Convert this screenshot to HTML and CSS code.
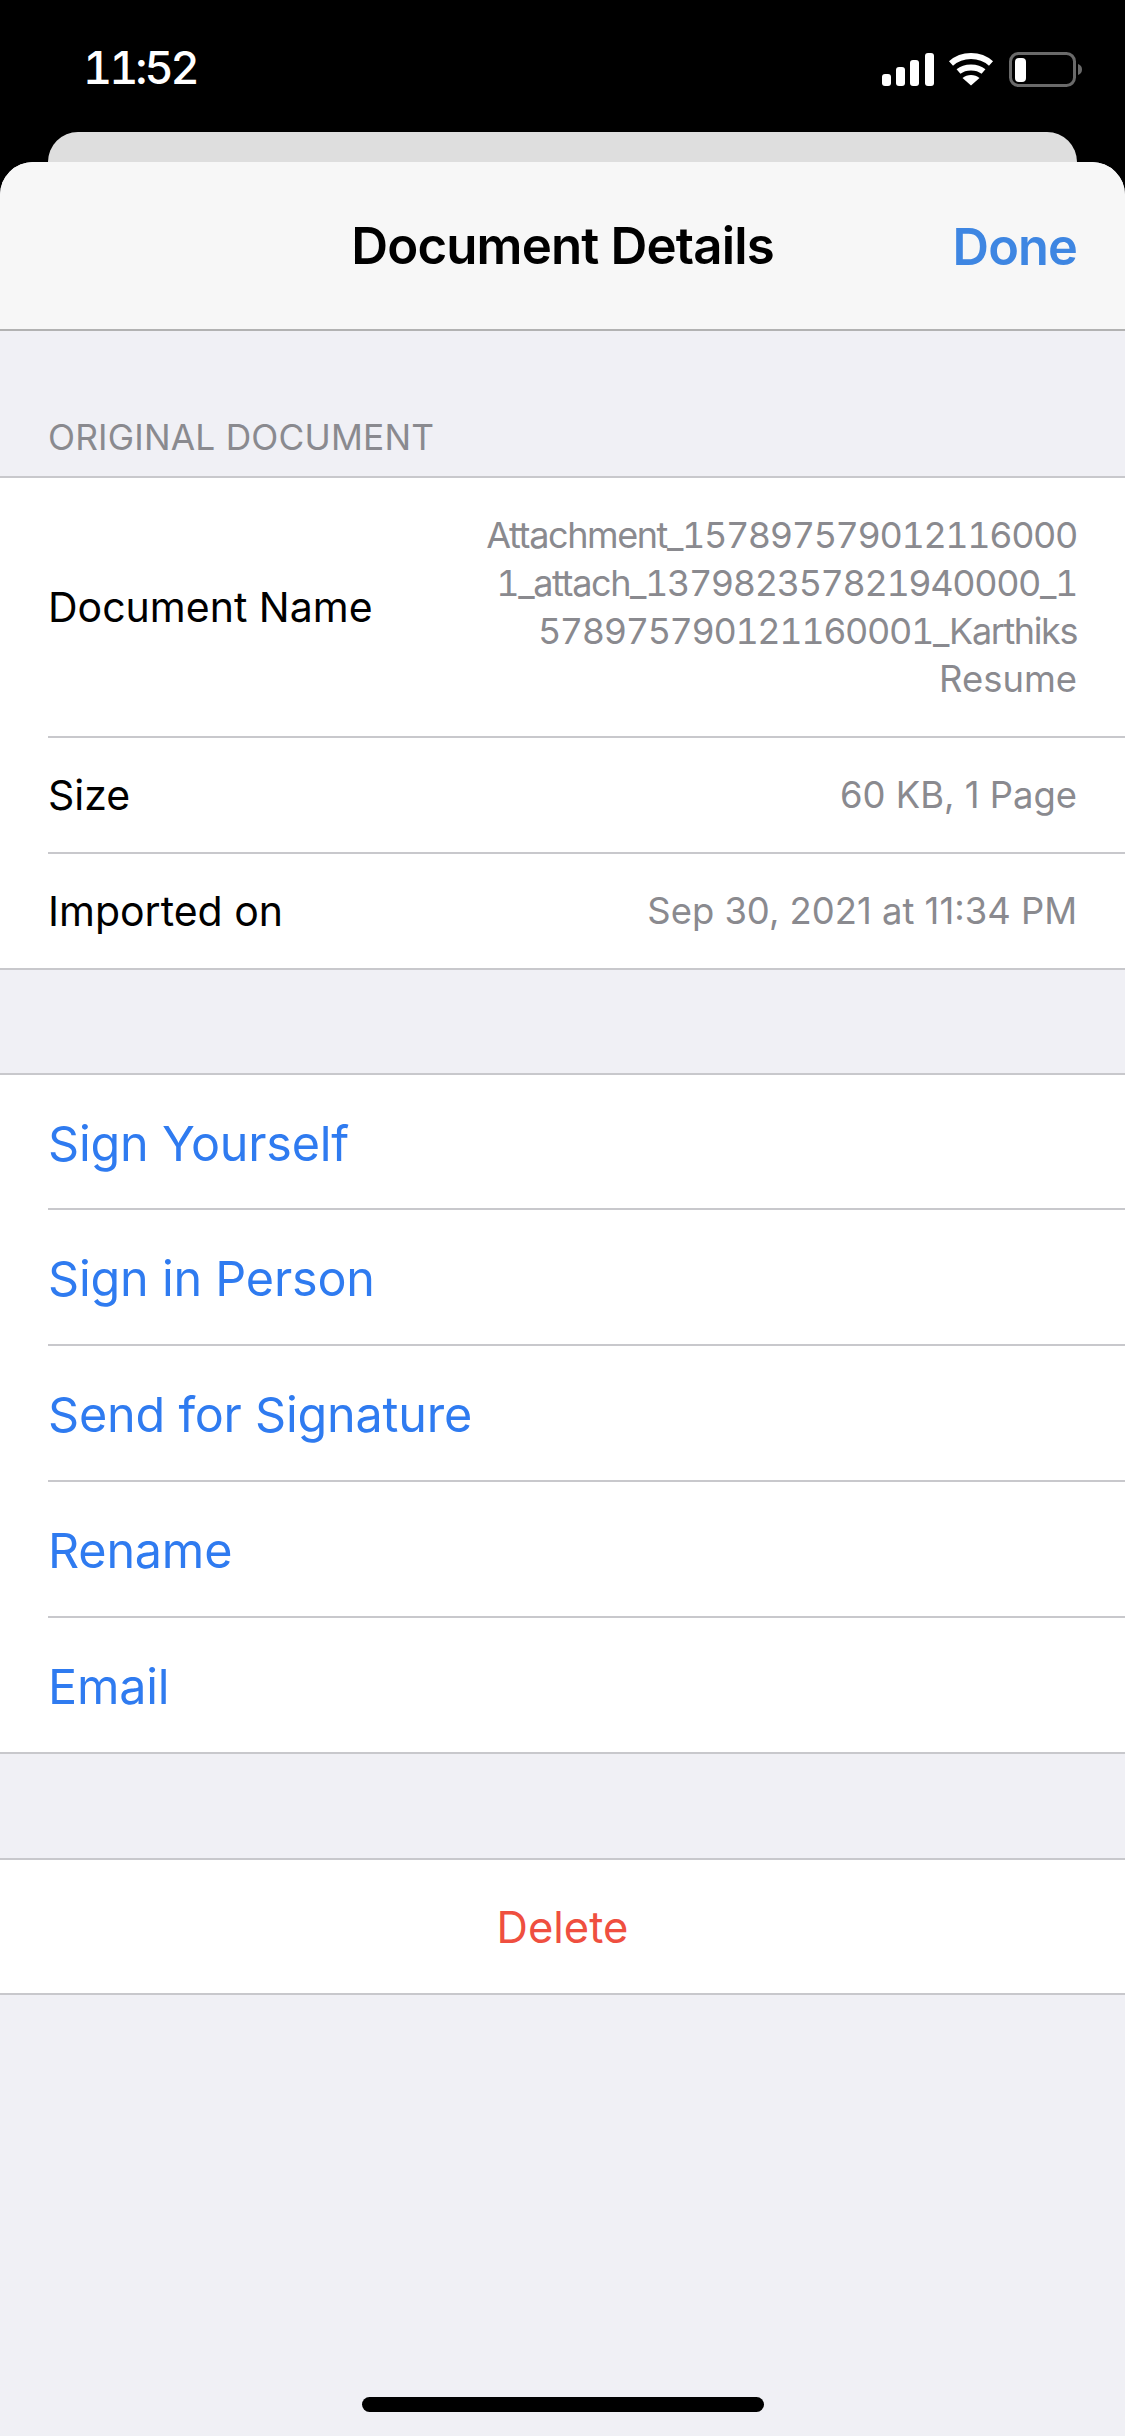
FILE: index.html
```html
<!DOCTYPE html>
<html lang="en">
<head>
<meta charset="utf-8">
<title>Document Details</title>
<link rel="stylesheet" href="styles.css">
</head>
<body>
<div class="screen">
  <div class="status">
    <span class="time">11:52</span>
    <div class="status-icons">
      <svg class="signal" width="52" height="33" viewBox="0 0 52 33"><rect x="0" y="21" width="9" height="12" rx="3" fill="#fff"/><rect x="14" y="14" width="9" height="19" rx="3" fill="#fff"/><rect x="28" y="7" width="9" height="26" rx="3" fill="#fff"/><rect x="43" y="0" width="9" height="33" rx="3" fill="#fff"/></svg>
      <svg class="wifi" width="46" height="34" viewBox="0 0 46 34"><path d="M3 11.500C14 1.500 32 1.500 43 11.500" fill="none" stroke="#fff" stroke-width="6"/><path d="M10.500 19.500C17 14 29 14 35.500 19.500" fill="none" stroke="#fff" stroke-width="6"/><path d="M23 33.500L14.500 26C19 22 27 22 31.500 26Z" fill="#fff"/></svg>
      <svg class="battery" width="74" height="36" viewBox="0 0 74 36"><rect x="1.500" y="1.500" width="64" height="32" rx="8" fill="none" stroke="#6a6a6a" stroke-width="3"/><rect x="6" y="6" width="11" height="24" rx="4" fill="#fff"/><path d="M69 12C72 13 73 15 73 17.500C73 20 72 22 69 23Z" fill="#6a6a6a"/></svg>
    </div>
  </div>
  <div class="peek"></div>
  <main class="sheet">
    <header class="nav">
      <h1 class="nav-title">Document Details</h1>
      <span class="nav-done">Done</span>
    </header>
    <div class="section-label">ORIGINAL DOCUMENT</div>
    <section class="group">
      <div class="info-row info-row-name">
        <span class="info-key">Document Name</span>
        <span class="info-val info-val-name">Attachment_157897579012116000<br>1_attach_137982357821940000_1<br>578975790121160001_Karthiks<br><span class="name-tail">Resume</span></span>
      </div>
      <div class="info-row">
        <span class="info-key">Size</span>
        <span class="info-val">60 KB, 1 Page</span>
      </div>
      <div class="info-row">
        <span class="info-key">Imported on</span>
        <span class="info-val">Sep 30, 2021 at 11:34 PM</span>
      </div>
    </section>
    <section class="group group-gap">
      <div class="action">Sign Yourself</div>
      <div class="action">Sign in Person</div>
      <div class="action">Send for Signature</div>
      <div class="action">Rename</div>
      <div class="action">Email</div>
    </section>
    <section class="group group-gap group-delete">
      <div class="delete">Delete</div>
    </section>
    <div class="home-wrap"><div class="home-bar"></div></div>
  </main>
</div>
</body>
</html>
```
FILE: styles.css
```css
* { box-sizing: border-box; }
html, body { margin: 0; padding: 0; }
body { background: #000; font-family: Inter, "Liberation Sans", sans-serif; }
.screen { width: 1125px; height: 2436px; display: flex; flex-direction: column; background: #000; overflow: hidden; }
.status { height: 132px; flex: none; display: flex; justify-content: space-between; align-items: flex-start; padding: 0 42px 0 83px; }
.time { margin-top: 43px; color: #fff; font-size: 45px; line-height: 50px; font-weight: 500; letter-spacing: -3px; font-variant-numeric: tabular-nums; }
.status-icons { display: flex; align-items: flex-start; margin-top: 52px; }
.signal { margin-top: 1px; }
.wifi { margin-left: 14px; }
.battery { margin-left: 15px; }
.peek { height: 30px; flex: none; margin: 0 48px; background: #dedede; border-radius: 30px 30px 0 0; }
.sheet { flex: 1; display: flex; flex-direction: column; background: #f0f0f5; border-radius: 33px 33px 0 0; overflow: hidden; }
.nav { height: 169px; flex: none; display: flex; align-items: center; justify-content: center; position: relative; background: #f7f7f7; border-bottom: 2px solid #b2b2b2; }
.nav-title { margin: 0; font-size: 51px; font-weight: 600; letter-spacing: -0.85px; color: #000; }
.nav-done { position: absolute; right: 48px; top: 50%; transform: translateY(-50%); font-size: 50.500px; font-weight: 600; letter-spacing: -0.9px; color: #3e86e2; }
.section-label { height: 147px; flex: none; padding: 85px 48px 0; font-size: 35.300px; line-height: 44px; letter-spacing: 0.2px; color: #8a8a8f; border-bottom: 2px solid #c8c8cc; }
.group { background: #fff; flex: none; border-bottom: 2px solid #c8c8cc; }
.group-gap { margin-top: 103px; border-top: 2px solid #c8c8cc; }
.group-delete { margin-top: 104px; }
.info-row { display: flex; align-items: center; justify-content: space-between; height: 116px; margin-left: 48px; padding-right: 48px; border-bottom: 2px solid #c8c8cc; }
.info-row:last-child { height: 114px; border-bottom: 0; }
.info-row-name { height: 260px; }
.info-key { flex: none; font-size: 41px; letter-spacing: 0; color: #000; }
.info-val { font-size: 36.400px; color: #8a8a8f; text-align: right; }
.info-val-name { font-size: 36px; line-height: 48px; letter-spacing: -1.4px; font-variant-numeric: tabular-nums; }
.name-tail { font-size: 36.400px; letter-spacing: 0; }
.action { height: 136px; margin-left: 48px; padding-top: 3px; display: flex; align-items: center; border-bottom: 2px solid #c8c8cc; font-size: 48.500px; letter-spacing: -0.2px; color: #2f7bf0; }
.action:first-child { height: 135px; }
.action:last-child { height: 134px; border-bottom: 0; }
.delete { height: 133px; display: flex; align-items: center; justify-content: center; font-size: 43.500px; color: #ef4f40; }
.home-wrap { margin-top: auto; height: 39px; flex: none; display: flex; justify-content: center; }
.home-bar { width: 402px; height: 15px; border-radius: 8px; background: #000; }
```
